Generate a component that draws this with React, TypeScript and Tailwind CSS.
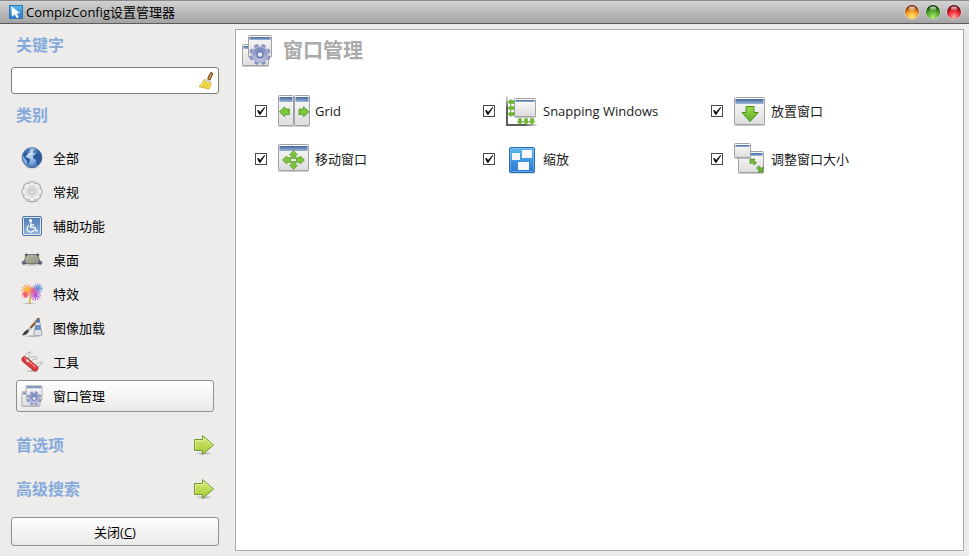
import React, { useState } from 'react';

/* ---------- shared gradients ---------- */

function Gradients() {
  return (
    <svg className="absolute h-0 w-0" aria-hidden="true">
      <defs>
        <linearGradient id="g-face" x1="0" y1="0" x2="0" y2="1">
          <stop offset="0" stopColor="#fcfcfc" />
          <stop offset="1" stopColor="#dcdcde" />
        </linearGradient>
        <linearGradient id="g-bar" x1="0" y1="0" x2="0" y2="1">
          <stop offset="0" stopColor="#41669c" />
          <stop offset="1" stopColor="#9fb6d6" />
        </linearGradient>
        <linearGradient id="g-green" x1="0" y1="0" x2="0" y2="1">
          <stop offset="0" stopColor="#9bd951" />
          <stop offset="1" stopColor="#5fae20" />
        </linearGradient>
        <linearGradient id="g-lime" x1="0" y1="0" x2="0" y2="1">
          <stop offset="0" stopColor="#d8ec78" />
          <stop offset="1" stopColor="#a3c832" />
        </linearGradient>
        <linearGradient id="g-blue" x1="0" y1="0" x2="0" y2="1">
          <stop offset="0" stopColor="#5cb8ec" />
          <stop offset="1" stopColor="#2b76d2" />
        </linearGradient>
        <radialGradient id="g-globe" cx="0.38" cy="0.35" r="0.7">
          <stop offset="0" stopColor="#cfe3f8" />
          <stop offset="0.55" stopColor="#86afe0" />
          <stop offset="1" stopColor="#3a68aa" />
        </radialGradient>
        <linearGradient id="g-access" x1="0" y1="0" x2="0" y2="1">
          <stop offset="0" stopColor="#4c78b2" />
          <stop offset="1" stopColor="#93b5dc" />
        </linearGradient>
        <linearGradient id="g-gear" x1="0" y1="0" x2="0" y2="1">
          <stop offset="0" stopColor="#7288b4" />
          <stop offset="1" stopColor="#c5c1e6" />
        </linearGradient>
        <radialGradient id="g-shadow">
          <stop offset="0" stopColor="#000" stopOpacity="0.3" />
          <stop offset="1" stopColor="#000" stopOpacity="0" />
        </radialGradient>
        <linearGradient id="g-desk" x1="0" y1="0" x2="1" y2="1">
          <stop offset="0" stopColor="#b9bba9" />
          <stop offset="1" stopColor="#8c8f7c" />
        </linearGradient>
        <linearGradient id="g-axis-x" x1="0" y1="0" x2="1" y2="0">
          <stop offset="0.6" stopColor="#5c5c58" />
          <stop offset="1" stopColor="#5c5c58" stopOpacity="0.15" />
        </linearGradient>
        <linearGradient id="g-axis-y" x1="0" y1="0" x2="0" y2="1">
          <stop offset="0" stopColor="#5c5c58" stopOpacity="0.15" />
          <stop offset="0.4" stopColor="#5c5c58" />
        </linearGradient>
        <radialGradient id="g-orange" cx="0.5" cy="0.85" r="0.85">
          <stop offset="0" stopColor="#fff07c" />
          <stop offset="0.5" stopColor="#f99c2c" />
          <stop offset="1" stopColor="#6a1c00" />
        </radialGradient>
        <radialGradient id="g-orbgreen" cx="0.5" cy="0.85" r="0.85">
          <stop offset="0" stopColor="#b4ea7a" />
          <stop offset="0.5" stopColor="#55a82c" />
          <stop offset="1" stopColor="#0c3203" />
        </radialGradient>
        <radialGradient id="g-red" cx="0.5" cy="0.85" r="0.85">
          <stop offset="0" stopColor="#ffb0a8" />
          <stop offset="0.5" stopColor="#ee2530" />
          <stop offset="1" stopColor="#4c0006" />
        </radialGradient>
        <linearGradient id="g-gloss" x1="0" y1="0" x2="0" y2="1">
          <stop offset="0" stopColor="#fff" stopOpacity="0.8" />
          <stop offset="1" stopColor="#fff" stopOpacity="0.1" />
        </linearGradient>
      </defs>
    </svg>
  );
}

/* ---------- drawing parts ---------- */

type Box = { x: number; y: number; w: number; h: number; bar?: number };

function Frame({ x, y, w, h, bar = 5 }: Box) {
  return (
    <g>
      <rect x={x} y={y + 1} width={w} height={h} rx="1.5" fill="#000" opacity="0.2" />
      <rect x={x + 0.5} y={y + 0.5} width={w - 1} height={h - 1} rx="1" fill="url(#g-face)" stroke="#a2a2a2" />
      <rect x={x + 1.5} y={y + 2} width={w - 3} height={bar} fill="url(#g-bar)" />
    </g>
  );
}

function Arrow({ cx, cy, r, s = 1 }: { cx: number; cy: number; r: number; s?: number }) {
  return (
    <path
      transform={`translate(${cx} ${cy}) rotate(${r}) scale(${s})`}
      d="M0 -5 L5.4 0 L0 5 V2.8 H-4.6 V-2.8 H0 Z"
      fill="#7ec63a"
      stroke="#56982a"
      strokeWidth="0.9"
      strokeLinejoin="round"
    />
  );
}

const teeth = [0, 45, 90, 135, 180, 225, 270, 315];

/* ---------- 32px plugin icons ---------- */

const big = { className: 'h-8 w-8 shrink-0', viewBox: '0 0 32 32', 'aria-hidden': true } as const;

function GridIcon() {
  return (
    <svg {...big}>
      <Frame x={0} y={0} w={16} h={31} />
      <Frame x={16} y={0} w={16} h={31} />
      <Arrow cx={6.8} cy={16.8} r={180} />
      <Arrow cx={25.6} cy={16.8} r={0} />
    </svg>
  );
}

function SnapIcon() {
  return (
    <svg {...big}>
      <rect x="0" y="1" width="2" height="30" fill="url(#g-axis-y)" />
      <rect x="0" y="29" width="31" height="2" fill="url(#g-axis-x)" />
      <Frame x={8} y={3} w={22} h={19} bar={2} />
      {[7, 13, 19].map((y) => (
        <path key={y} d={`M2 ${y} L5 ${y - 3} V${y - 1.5} H8 V${y + 1.5} H5 V${y + 3} Z`} fill="#6cbb2c" stroke="#55991f" strokeWidth="0.4" />
      ))}
      {[14, 20, 26].map((x) => (
        <path key={x} d={`M${x} 29.5 L${x - 3} 26.5 H${x - 1.5} V23.5 H${x + 1.5} V26.5 H${x + 3} Z`} fill="#6cbb2c" stroke="#55991f" strokeWidth="0.4" />
      ))}
    </svg>
  );
}

function PlaceIcon() {
  return (
    <svg {...big}>
      <Frame x={0} y={2} w={31} h={28} />
      <path
        d="M12 11.5 H20 V17.5 H24.3 L16 26.5 L8 17.5 H12 Z"
        fill="url(#g-green)"
        stroke="#4d8f1f"
        strokeLinejoin="round"
      />
    </svg>
  );
}

function MoveIcon() {
  return (
    <svg {...big}>
      <Frame x={0} y={1} w={31} h={27} />
      <Arrow cx={15.5} cy={11.8} r={-90} s={0.8} />
      <Arrow cx={15.5} cy={22.2} r={90} s={0.8} />
      <Arrow cx={8.8} cy={17} r={180} s={0.8} />
      <Arrow cx={22.2} cy={17} r={0} s={0.8} />
    </svg>
  );
}

function ScaleIcon() {
  return (
    <svg {...big}>
      <rect x="3" y="5" width="26" height="26" rx="2" fill="#000" opacity="0.15" />
      <rect x="3.5" y="4.5" width="25" height="25" rx="1.5" fill="url(#g-blue)" stroke="#2a6db4" />
      <rect x="4.5" y="5.5" width="23" height="23" rx="1" fill="none" stroke="#8fcdf5" strokeOpacity="0.5" />
      <rect x="6" y="10" width="8" height="7" fill="#f6f8fb" />
      <rect x="16" y="7" width="10" height="8" fill="#f6f8fb" />
      <rect x="12" y="19" width="11" height="8" fill="#f6f8fb" />
    </svg>
  );
}

function ResizeIcon() {
  return (
    <svg {...big}>
      <Frame x={4} y={8} w={26} h={22} bar={3} />
      <Frame x={0} y={0} w={17} h={15} bar={2} />
      <g fill="#70b838" stroke="#4c8c22" strokeWidth="0.7" strokeLinejoin="round">
        <path d="M16 16 H21 L19.8 17.4 L22.4 19.4 L20.4 22 L18 19.6 L16 21 Z" />
        <path d="M29 29 H24 L25.2 27.6 L22.6 25.2 L24.8 22.8 L27.2 25.4 L29 24 Z" />
      </g>
    </svg>
  );
}

function WindowGearIcon({ className }: { className: string }) {
  return (
    <svg className={className} viewBox="0 0 32 32" aria-hidden="true">
      <Frame x={1} y={9} w={27} h={22} bar={3} />
      <Frame x={7} y={0} w={24} h={22} bar={3} />
      <g transform="translate(19 19.5)">
        <g fill="url(#g-gear)" stroke="#8a8fbc" strokeWidth="0.4">
          {teeth.map((a) => (
            <path key={a} d="M-2.8 -6 L-1.6 -10.4 H1.6 L2.8 -6 Z" transform={`rotate(${a + 22})`} />
          ))}
        </g>
        <circle r="7" fill="url(#g-gear)" />
        <circle r="3" fill="#e6e6ee" stroke="#5f74a8" strokeWidth="1.3" />
      </g>
    </svg>
  );
}

/* ---------- 22px category icons ---------- */

const small = { className: 'h-[22px] w-[22px] shrink-0', viewBox: '0 0 22 22', 'aria-hidden': true } as const;

function GlobeIcon() {
  return (
    <svg {...small}>
      <ellipse cx="11" cy="20.6" rx="9" ry="1.4" fill="url(#g-shadow)" />
      <circle cx="11" cy="10.6" r="9.9" fill="url(#g-globe)" stroke="#36629f" strokeWidth="0.9" />
      <g fill="#2c5a9b">
        <path d="M2 8.2 C2.8 5.2 5 2.8 7.8 1.8 L9.6 2.4 L8.4 3.8 L9 5.4 L6.8 6.6 L5.8 8.4 L4.2 9 L5.4 10.6 L7.8 11.2 L9.4 12.8 L8.2 15 L7.6 18 L6.4 16.6 L5.8 13.6 L3.8 11.4 Z" />
        <path d="M12.2 4.6 L13.6 2.4 L16.6 3 C19 4.8 20.4 7.4 20.4 10.8 C20.2 14 18.8 16.6 16.6 18.2 L15 15.6 L15.4 12.8 L13 12 L11.8 9.8 L13.2 7.8 L15.2 7.4 L14.2 5.8 L12.6 6.4 Z" />
      </g>
      <path d="M3.8 5.2 A9 9 0 0 1 18.2 5.2 Q11 8.4 3.8 5.2 Z" fill="#fff" opacity="0.16" />
    </svg>
  );
}

function GearShape() {
  return (
    <>
      {teeth.map((a) => (
        <path key={a} d="M-3 -7 L-2.2 -9.4 H2.2 L3 -7 Z" transform={`rotate(${a})`} />
      ))}
      <circle r="7.8" />
    </>
  );
}

function GearIcon() {
  return (
    <svg {...small}>
      <ellipse cx="11" cy="20.4" rx="8" ry="1.5" fill="url(#g-shadow)" />
      <g transform="translate(11 10.6)">
        <g fill="none" stroke="#a2a3a0" strokeWidth="1.8" strokeLinejoin="round">
          <GearShape />
        </g>
        <g fill="#efefed">
          <GearShape />
        </g>
        <circle r="5.4" fill="#e3e3e1" stroke="#c4c5c2" strokeWidth="0.8" />
        <circle r="2.6" fill="#f2f2f1" stroke="#a2a3a0" strokeWidth="0.9" />
        <circle r="0.9" fill="#c9cac7" />
      </g>
    </svg>
  );
}

function AccessIcon() {
  return (
    <svg {...small}>
      <rect x="1.5" y="1.5" width="19" height="19" rx="1.5" fill="url(#g-access)" stroke="#5078ab" />
      <rect x="2.5" y="2.5" width="17" height="17" rx="0.5" fill="none" stroke="#dbe5f1" />
      <circle cx="9.6" cy="5.8" r="1.7" fill="#fff" />
      <path d="M9.8 7.4 V12.4 H13.8 L15.2 15.8 H16.8 M9.8 9.8 H13" fill="none" stroke="#fff" strokeWidth="1.3" />
      <path d="M8 10.2 A3.7 3.7 0 1 0 13.2 14.8" fill="none" stroke="#fff" strokeWidth="1.2" />
    </svg>
  );
}

function DesktopIcon() {
  return (
    <svg {...small}>
      <ellipse cx="11" cy="15.8" rx="10" ry="1.2" fill="url(#g-shadow)" />
      <path d="M5.2 5.5 H16.8 L19.4 14.5 H2.6 Z" fill="url(#g-desk)" stroke="#6d705f" strokeWidth="0.9" />
      <g fill="#566b93" stroke="#33425f" strokeWidth="0.5">
        <circle cx="5.2" cy="5.8" r="1.1" />
        <circle cx="16.8" cy="5.8" r="1.1" />
        <circle cx="2.8" cy="13.8" r="1.7" />
        <circle cx="19.2" cy="13.8" r="1.7" />
      </g>
    </svg>
  );
}

function Burst({ cx, cy, r, color }: { cx: number; cy: number; r: number; color: string }) {
  return (
    <g transform={`translate(${cx} ${cy})`} stroke={color} strokeWidth="0.9" strokeLinecap="round">
      {[0, 30, 60, 90, 120, 150].map((a) => (
        <path key={a} d={`M${-r} 0 H${r}`} transform={`rotate(${a})`} />
      ))}
    </g>
  );
}

function EffectsIcon() {
  return (
    <svg {...small}>
      <ellipse cx="8" cy="20.4" rx="7" ry="1.2" fill="url(#g-shadow)" />
      <path d="M9.6 12.5 L8.6 19.6" stroke="#e6b41c" strokeWidth="1.5" strokeLinecap="round" />
      <Burst cx={16.8} cy={5.4} r={4.6} color="#5c8ad8" />
      <Burst cx={14.4} cy={12} r={5.4} color="#b04fd8" />
      <Burst cx={11.8} cy={8} r={4} color="#d85aa8" />
      <Burst cx={6.2} cy={7.2} r={5.8} color="#f9902f" />
      <Burst cx={6.2} cy={6.6} r={2.6} color="#fbb83c" />
      <Burst cx={4.4} cy={11.8} r={2.8} color="#f4566e" />
    </svg>
  );
}

function ImageIcon() {
  return (
    <svg {...small}>
      <ellipse cx="12" cy="19.2" rx="9.5" ry="1.5" fill="url(#g-shadow)" />
      <path d="M17.6 1.8 L7.5 13.2" stroke="#7a4a1c" strokeWidth="2.1" strokeLinecap="round" />
      <path d="M17 2 L10.6 9.2" stroke="#cc8b46" strokeWidth="0.8" />
      <path d="M9.8 10.6 L6.8 14" stroke="#c2c6cb" strokeWidth="2.5" />
      <path d="M7.8 13.4 Q7.2 17.6 1 18.6 Q3.4 14 6.2 12.6 Z" fill="#3b3e41" />
      <path d="M15 4.6 H18.8 L21 17.8 Q17 19.6 12.8 17.8 Z" fill="#dfe4ea" stroke="#939ba5" strokeWidth="0.8" />
      <path d="M14.6 8 H19.2 L20 13 H13.8 Z" fill="#6a93c8" />
      <rect x="15.2" y="2.6" width="3.6" height="3" rx="0.5" fill="#4c75ae" />
    </svg>
  );
}

function ToolsIcon() {
  return (
    <svg {...small}>
      <ellipse cx="11" cy="20" rx="7" ry="1.4" fill="url(#g-shadow)" />
      <g fill="#f4f4f4" stroke="#999" strokeWidth="0.7">
        <path d="M3.8 6.6 Q3.6 2.6 9.4 0.8 L10 2 Q6.6 4 7.8 8.4 Z" />
        <path d="M7.8 8 Q9.6 4.8 15.8 6.4 L15 8.6 Q11.4 7.6 10 10.8 Z" />
        <path d="M14.6 15 Q15 11.4 21.2 10.8 L20.8 12.8 Q17.8 13.2 16.8 17 Z" />
      </g>
      <path d="M3.6 8.4 L14.2 17.4" stroke="#a81c1c" strokeWidth="6" strokeLinecap="round" />
      <path d="M3.6 8.4 L14.2 17.4" stroke="#dc3c3c" strokeWidth="4.8" strokeLinecap="round" />
      <path d="M3.8 7 L14.6 16" stroke="#f2958e" strokeWidth="1.1" strokeLinecap="round" />
      <path d="M5.2 9.8 h2.6 M6.5 8.5 v2.6" stroke="#fff" strokeWidth="0.9" />
    </svg>
  );
}

/* ---------- misc glyphs ---------- */

function AppIcon() {
  return (
    <svg className="h-[14px] w-[14px] shrink-0" viewBox="0 0 14 14" aria-hidden="true">
      <rect x="0.5" y="0.5" width="13" height="13" fill="url(#g-blue)" stroke="#3177b8" />
      <path d="M2.4 1.4 L11 8 L7.6 8.4 L9.8 12.2 L7.8 13.2 L5.8 9.4 L3 11.8 Z" fill="#fff" />
    </svg>
  );
}

function BroomIcon() {
  return (
    <svg className="h-[18px] w-4" viewBox="0 0 16 18" aria-hidden="true">
      <path d="M13.4 2 L11.2 6.4" stroke="#6e4416" strokeWidth="3.6" strokeLinecap="round" />
      <path d="M13.4 2 L11.2 6.4" stroke="#cb9352" strokeWidth="1.8" strokeLinecap="round" />
      <path d="M6.4 7.4 L12.8 9.4 Q13.4 13.4 11 17 L1 14.6 Q4.8 12 6.4 7.4 Z" fill="#f4e04a" stroke="#c4a71c" strokeWidth="0.8" />
      <path d="M8 10 L5 15 M10.4 10.6 L8.4 15.8" stroke="#d6b824" strokeWidth="0.8" />
      <path d="M6.8 7.6 L12.8 9.8" stroke="#d9cfd8" strokeWidth="2" />
    </svg>
  );
}

function LimeArrow() {
  return (
    <svg className="h-[22px] w-[22px] shrink-0" viewBox="0 0 22 22" aria-hidden="true">
      <ellipse cx="11" cy="19.4" rx="9" ry="1.8" fill="url(#g-shadow)" />
      <path d="M1.5 5.5 H9.5 V1.5 L20.5 11 L9.5 20.5 V16.5 H1.5 Z" fill="url(#g-lime)" stroke="#6f9c34" strokeLinejoin="round" />
      <path d="M2.6 15 V6.6 H10.6 V3.8 L18.6 10.6" fill="none" stroke="#e4f29a" strokeWidth="0.9" />
    </svg>
  );
}

function Orb({ label, fill }: { label: string; fill: string }) {
  return (
    <button type="button" aria-label={label} className="h-4 w-4">
      <svg className="h-4 w-4" viewBox="0 0 16 16" aria-hidden="true">
        <circle cx="8" cy="8" r="7.8" fill="#fff" opacity="0.35" />
        <circle cx="8" cy="8" r="7" fill={fill} />
        <ellipse cx="8" cy="4.6" rx="3.2" ry="2.2" fill="url(#g-gloss)" />
      </svg>
    </button>
  );
}

/* ---------- page ---------- */

const categories = [
  { name: '全部', icon: <GlobeIcon /> },
  { name: '常规', icon: <GearIcon /> },
  { name: '辅助功能', icon: <AccessIcon /> },
  { name: '桌面', icon: <DesktopIcon /> },
  { name: '特效', icon: <EffectsIcon /> },
  { name: '图像加载', icon: <ImageIcon /> },
  { name: '工具', icon: <ToolsIcon /> },
  { name: '窗口管理', icon: <WindowGearIcon className="h-[22px] w-[22px] shrink-0" /> },
];

const plugins = [
  { id: 'grid', name: 'Grid', icon: <GridIcon /> },
  { id: 'snap', name: 'Snapping Windows', icon: <SnapIcon /> },
  { id: 'place', name: '放置窗口', icon: <PlaceIcon /> },
  { id: 'move', name: '移动窗口', icon: <MoveIcon /> },
  { id: 'scale', name: '缩放', icon: <ScaleIcon /> },
  { id: 'resize', name: '调整窗口大小', icon: <ResizeIcon /> },
];

function Plugin({ id, name, icon }: { id: string; name: string; icon: React.ReactNode }) {
  const [on, setOn] = useState(true);
  return (
    <li className="flex h-8 items-center">
      <span className="grid h-3 w-3 shrink-0">
        <input
          id={id}
          type="checkbox"
          checked={on}
          onChange={() => setOn(!on)}
          className="col-start-1 row-start-1 h-3 w-3 appearance-none border border-[#4a4a48] bg-white"
        />
        {on && (
          <svg className="pointer-events-none col-start-1 row-start-1 h-3 w-3" viewBox="0 0 12 12" aria-hidden="true">
            <path d="M2 5.4 L3.8 5 L5 7 L9.4 2 L10.2 2.6 L5.4 9.8 L4.2 9.8 Z" fill="#111" />
          </svg>
        )}
      </span>
      <label htmlFor={id} className="ml-[11px] flex items-center gap-[5px] whitespace-nowrap">
        {icon}
        {name}
      </label>
    </li>
  );
}

const heading = 'text-base leading-6 font-bold text-[#86abdb]';
const raised = 'rounded-[3px] border border-[#8f8f8d] bg-gradient-to-b from-white to-[#e9e9e7]';

export default function App() {
  const [active, setActive] = useState('窗口管理');
  return (
    <div className="flex min-h-screen flex-col bg-[#edeceb] font-['Open_Sans','Noto_Sans_CJK_SC',sans-serif] text-[13px] leading-5 text-[#1a1a1a]">
      <Gradients />
      <header className="flex h-6 items-center border-t border-b border-t-[#8c8c8c] border-b-[#5c5c5c] bg-gradient-to-b from-[#d2d2d2] to-[#a4a4a4] pr-[7px] pl-[9px]">
        <AppIcon />
        <h1 className="ml-[3px] flex-1 text-black">CompizConfig设置管理器</h1>
        <div className="flex gap-[5px]">
          <Orb label="最小化" fill="url(#g-orange)" />
          <Orb label="最大化" fill="url(#g-orbgreen)" />
          <Orb label="关闭窗口" fill="url(#g-red)" />
        </div>
      </header>

      <div className="flex flex-1 gap-4 pr-[5px] pl-[11px]">
        <aside className="flex w-52 shrink-0 flex-col pt-[9px] pb-[10px]">
          <label htmlFor="filter" className={`${heading} pl-[5px]`}>
            关键字
          </label>
          <div className="mt-[10px] flex h-[27px] items-center rounded-[3px] border border-[#7d7d7b] bg-white pr-1">
            <input id="filter" type="text" className="h-full min-w-0 flex-1 px-2 outline-none" />
            <button type="button" aria-label="清除">
              <BroomIcon />
            </button>
          </div>

          <h2 className={`${heading} mt-[9px] pl-[5px]`}>类别</h2>
          <nav className="mt-[15px] flex flex-col gap-0.5 px-[5px]">
            {categories.map((c) => (
              <button
                key={c.name}
                type="button"
                onClick={() => setActive(c.name)}
                className={`flex h-8 items-center gap-[10px] pl-1 text-left text-black ${
                  c.name === active ? raised : 'border border-transparent'
                }`}
              >
                {c.icon}
                {c.name}
              </button>
            ))}
          </nav>

          <button type="button" className={`${heading} mt-[21px] flex items-center justify-between pr-1 pl-[5px]`}>
            首选项
            <LimeArrow />
          </button>
          <button type="button" className={`${heading} mt-5 flex items-center justify-between pr-1 pl-[5px]`}>
            高级搜索
            <LimeArrow />
          </button>
          <button type="button" className={`${raised} mt-auto h-[29px] text-black`}>
            关闭(<span className="underline">C</span>)
          </button>
        </aside>

        <main className="my-[5px] min-w-0 flex-1 border border-[#aaaaaa] bg-white">
          <div className="flex items-center gap-[10px] pt-[5px] pl-[5px]">
            <WindowGearIcon className="h-8 w-8 shrink-0" />
            <h2 className="text-xl leading-8 font-bold text-[#aaaaaa]">窗口管理</h2>
          </div>
          <ul className="mt-7 grid grid-cols-[repeat(auto-fill,228px)] gap-y-4 pl-[19px]">
            {plugins.map((p) => (
              <Plugin key={p.id} {...p} />
            ))}
          </ul>
        </main>
      </div>
    </div>
  );
}
